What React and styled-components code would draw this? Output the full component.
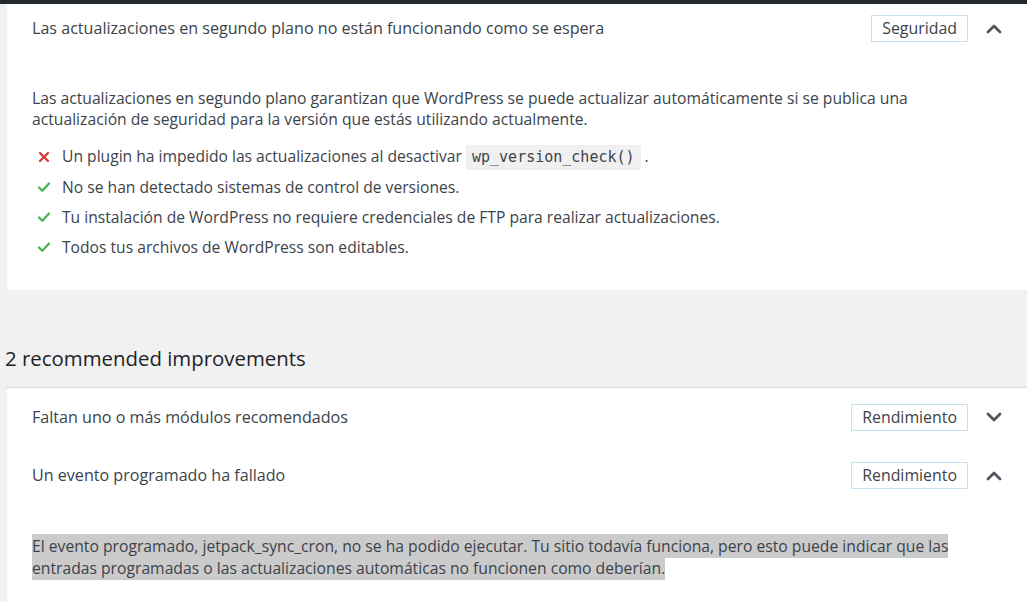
import React from "react";
import styled, { createGlobalStyle } from "styled-components";

const GlobalStyle = createGlobalStyle`
  html, body {
    margin: 0;
    padding: 0;
    background: #f1f1f1;
  }
  body {
    font-family: "Open Sans", "Noto Sans", sans-serif;
    color: #3c434a;
    overflow: hidden;
  }
`;

function Chevron({ up }) {
  return (
    <svg width="16" height="11" viewBox="0 0 16 11">
      <polyline
        points={up ? "2,9 8,3 14,9" : "2,2 8,8 14,2"}
        fill="none"
        stroke="#50575e"
        strokeWidth="2.8"
        strokeLinecap="round"
        strokeLinejoin="round"
      />
    </svg>
  );
}

function StatusIcon({ ok }) {
  if (ok) {
    return (
      <svg width="14" height="14" viewBox="0 0 14 14">
        <polyline
          points="2,7.5 5.3,10.8 12,3.5"
          fill="none"
          stroke="#46b450"
          strokeWidth="2.2"
          strokeLinecap="round"
          strokeLinejoin="round"
        />
      </svg>
    );
  }
  return (
    <svg width="14" height="14" viewBox="0 0 14 14">
      <path
        d="M3 3 L11 11 M11 3 L3 11"
        stroke="#dc3232"
        strokeWidth="2.2"
        strokeLinecap="round"
      />
    </svg>
  );
}

function IssueHeader({ title, badge, open, height = 48 }) {
  return (
    <HeaderRow $h={height}>
      <Title>{title}</Title>
      <Badge>{badge}</Badge>
      <Toggle>
        <Chevron up={open} />
      </Toggle>
    </HeaderRow>
  );
}

const checks = [
  { ok: false, text: "Un plugin ha impedido las actualizaciones al desactivar ", code: "wp_version_check()", after: " ." },
  { ok: true, text: "No se han detectado sistemas de control de versiones." },
  { ok: true, text: "Tu instalación de WordPress no requiere credenciales de FTP para realizar actualizaciones." },
  { ok: true, text: "Todos tus archivos de WordPress son editables." },
];

export default function App() {
  return (
    <Page>
      <GlobalStyle />
      <TopBar />
      <Content>
        <Panel>
          <IssueHeader
            title="Las actualizaciones en segundo plano no están funcionando como se espera"
            badge="Seguridad"
            open
          />
          <Body $top={36} $bottom={28}>
            <Text>
              Las actualizaciones en segundo plano garantizan que WordPress se puede actualizar
              automáticamente si se publica una
              <br />
              actualización de seguridad para la versión que estás utilizando actualmente.
            </Text>
            <CheckList>
              {checks.map((c, i) => (
                <CheckItem key={i}>
                  <IconBox>
                    <StatusIcon ok={c.ok} />
                  </IconBox>
                  <span>
                    {c.text}
                    {c.code && <Code>{c.code}</Code>}
                    {c.after}
                  </span>
                </CheckItem>
              ))}
            </CheckList>
          </Body>
        </Panel>

        <SectionHeading>2 recommended improvements</SectionHeading>

        <Panel>
          <IssueHeader title="Faltan uno o más módulos recomendados" badge="Rendimiento" height={58} />
          <IssueHeader title="Un evento programado ha fallado" badge="Rendimiento" height={58} open />
          <Body $top={31} $bottom={40}>
            <Text $lh={22}>
              <Selected>
                El evento programado, jetpack_sync_cron, no se ha podido ejecutar. Tu sitio todavía
                funciona, pero esto puede indicar que las
                <br />
                entradas programadas o las actualizaciones automáticas no funcionen como deberían.
              </Selected>
            </Text>
          </Body>
        </Panel>
      </Content>
    </Page>
  );
}

const Page = styled.div`
  width: 1027px;
  height: 602px;
  background: #f1f1f1;
  overflow: hidden;
`;

const TopBar = styled.div`
  height: 4px;
  background: #23282d;
`;

const Content = styled.div`
  padding-left: 7px;
`;

const Panel = styled.section`
  background: #ffffff;
`;

const HeaderRow = styled.div`
  display: flex;
  align-items: center;
  height: ${(p) => p.$h}px;
  padding: 0 25px;
`;

const Title = styled.h3`
  flex: 1;
  margin: 0;
  font-size: 16.1px;
  font-weight: 400;
  color: #3c434a;
`;

const Badge = styled.span`
  display: inline-flex;
  align-items: center;
  height: 25px;
  padding: 0 10px;
  border: 1px solid #c5e2ee;
  font-size: 15.9px;
  color: #3c434a;
`;

const Toggle = styled.span`
  display: flex;
  align-items: center;
  justify-content: center;
  width: 16px;
  margin-left: 18px;
`;

const Body = styled.div`
  padding: ${(p) => p.$top}px 25px ${(p) => p.$bottom}px;
`;

const Text = styled.p`
  margin: 0;
  font-size: 15.7px;
  line-height: ${(p) => p.$lh || 21}px;
  color: #3c434a;
`;

const Selected = styled.span`
  background: #cbcbcb;
  padding: 1px 0 1px;
`;

const CheckList = styled.ul`
  list-style: none;
  margin: 12px 0 0;
  padding: 0;
`;

const CheckItem = styled.li`
  display: flex;
  align-items: center;
  height: 30px;
  font-size: 15.65px;
  color: #3c434a;
`;

const IconBox = styled.span`
  display: flex;
  width: 30px;
  padding-left: 5px;
  box-sizing: border-box;
`;

const Code = styled.code`
  display: inline-block;
  font-family: "DejaVu Sans Mono", "Liberation Mono", monospace;
  font-size: 15px;
  line-height: 25px;
  padding: 0 6px;
  background: #f0f0f1;
  color: #3c434a;
`;

const SectionHeading = styled.h2`
  margin: 0 0 0 -2px;
  padding: 54px 0 15px;
  font-size: 20.4px;
  font-weight: 400;
  line-height: 28px;
  color: #1d2327;
  border-bottom: 1px solid #dcdcde;
`;
